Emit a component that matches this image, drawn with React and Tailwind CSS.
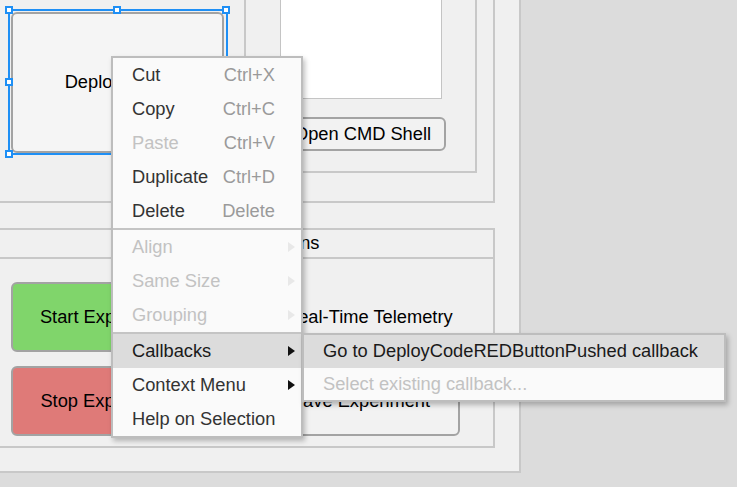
import React from 'react';

const menuTop = [
  { label: 'Cut', shortcut: 'Ctrl+X' },
  { label: 'Copy', shortcut: 'Ctrl+C' },
  { label: 'Paste', shortcut: 'Ctrl+V', disabled: true },
  { label: 'Duplicate', shortcut: 'Ctrl+D' },
  { label: 'Delete', shortcut: 'Delete' },
];

const menuMiddle = [
  { label: 'Align', disabled: true },
  { label: 'Same Size', disabled: true },
  { label: 'Grouping', disabled: true },
];

function Arrow({ disabled }) {
  return (
    <svg width="7" height="10" viewBox="0 0 7 10" className="shrink-0">
      <path d="M0 0 L7 5 L0 10 Z" fill={disabled ? '#e8e8e8' : '#111111'} />
    </svg>
  );
}

function Handle({ className }) {
  return (
    <div className={`absolute w-[8px] h-[8px] border-2 border-[#1e8ff5] bg-white ${className}`} />
  );
}

function ShortcutRow({ label, shortcut, disabled }) {
  return (
    <div className="h-[34px] flex items-center justify-between pl-[19px] pr-[26px]">
      <span className={disabled ? 'text-[#c2c2c2]' : 'text-[#333333]'}>{label}</span>
      <span className="text-[#9a9a9a]">{shortcut}</span>
    </div>
  );
}

function SubRow({ label, disabled, active }) {
  return (
    <div
      className={`h-[34px] flex items-center justify-between pl-[19px] pr-[6px] ${
        active ? 'bg-[#dcdcdc]' : ''
      }`}
    >
      <span className={disabled ? 'text-[#c2c2c2]' : active ? 'text-[#1a1a1a]' : 'text-[#333333]'}>
        {label}
      </span>
      <Arrow disabled={disabled} />
    </div>
  );
}

export default function App() {
  return (
    <div className="w-[737px] h-[487px] bg-[#dcdcdc] relative overflow-hidden font-['Liberation_Sans',Arial,sans-serif] text-[18.3px] leading-none text-black">
      {/* design canvas */}
      <div className="w-[521px] h-[473px] bg-[#f0f0f0] border-r-2 border-b-2 border-[#c8c8c8]">
        {/* top panel */}
        <div className="w-[495px] h-[203px] border-r-2 border-b-2 border-[#c8c8c8] flex">
          <div className="pl-[11px] pt-[12px]">
            <div className="w-[213px] h-[141px] rounded-[6px] border-2 border-[#a3a3a3] bg-[#f5f5f5] flex items-center justify-center">
              Deploy Code
            </div>
          </div>
          <div className="ml-[20px] w-[233px] h-[173px] border-l-2 border-r-2 border-b-2 border-[#c8c8c8] flex flex-col pl-[33px]">
            <div className="ml-[1px] w-[162px] h-[99px] bg-white border-l border-r border-b border-[#c4c4c4]" />
            <div className="mt-[18px] w-[167px] h-[34px] rounded-[6px] border-2 border-[#a3a3a3] bg-[#f2f2f2] flex items-center justify-center">
              Open CMD Shell
            </div>
          </div>
        </div>

        {/* bottom panel */}
        <div className="mt-[25px] w-[495px] h-[220px] border-t-2 border-r-2 border-b-2 border-[#c8c8c8] flex flex-col">
          <div className="h-[29px] border-b-2 border-[#c8c8c8] flex items-center pl-[163px]">
            Experiment Actions
          </div>
          <div className="flex">
            <div className="pl-[11px] pt-[23px] flex flex-col gap-[14px]">
              <div className="w-[194px] h-[70px] rounded-[6px] border-2 border-[#a3a3a3] bg-[#80d56b] flex items-center justify-center">
                Start Experiment
              </div>
              <div className="w-[194px] h-[70px] rounded-[6px] border-2 border-[#a3a3a3] bg-[#df7a78] flex items-center justify-center">
                Stop Experiment
              </div>
            </div>
            <div className="ml-[56px] pt-[23px] flex flex-col">
              <div className="h-[70px] flex items-center gap-[6px] pl-[4px]">
                <div className="w-[14px] h-[14px] border border-[#8a8a8a] bg-white" />
                <span>Real-Time Telemetry</span>
              </div>
              <div className="mt-[14px] w-[199px] h-[70px] rounded-[6px] border-2 border-[#a3a3a3] bg-[#f2f2f2] flex items-center justify-center">
                Save Experiment
              </div>
            </div>
          </div>
        </div>
      </div>

      {/* selection outline on the Deploy button */}
      <div className="absolute left-[8px] top-[9px] w-[220px] h-[146px] border-2 border-[#1e8ff5]" />
      <Handle className="left-[5px] top-[6px]" />
      <Handle className="left-[113px] top-[6px]" />
      <Handle className="left-[222px] top-[6px]" />
      <Handle className="left-[5px] top-[78px]" />
      <Handle className="left-[222px] top-[78px]" />
      <Handle className="left-[5px] top-[150px]" />
      <Handle className="left-[113px] top-[150px]" />
      <Handle className="left-[222px] top-[150px]" />

      {/* context menu */}
      <div className="absolute left-[111px] top-[56px] w-[192px] bg-[#fafafa] border-2 border-[#bdbdbd] shadow-[2px_3px_5px_rgba(0,0,0,0.25)]">
        {menuTop.map((item) => (
          <ShortcutRow key={item.label} {...item} />
        ))}
        <div className="h-[2px] bg-[#c4c4c4]" />
        {menuMiddle.map((item) => (
          <SubRow key={item.label} {...item} />
        ))}
        <div className="h-[2px] bg-[#c4c4c4]" />
        <SubRow label="Callbacks" active />
        <SubRow label="Context Menu" />
        <div className="h-[34px] flex items-center pl-[19px] text-[#333333]">Help on Selection</div>
      </div>

      {/* callbacks submenu */}
      <div className="absolute left-[302px] top-[333px] w-[424px] bg-[#fafafa] border-2 border-[#bdbdbd] shadow-[2px_3px_5px_rgba(0,0,0,0.25)]">
        <div className="h-[33px] flex items-center pl-[19px] bg-[#dcdcdc] text-[#1a1a1a]">
          Go to DeployCodeREDButtonPushed callback
        </div>
        <div className="h-[32px] flex items-center pl-[19px] text-[#c2c2c2]">
          Select existing callback...
        </div>
      </div>
    </div>
  );
}
